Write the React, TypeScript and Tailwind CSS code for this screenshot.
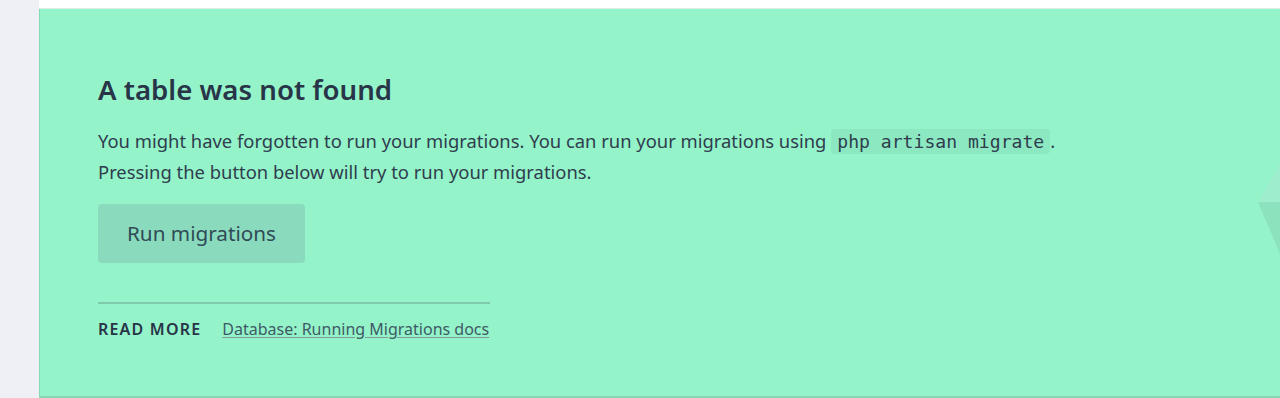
export default function App() {
  return (
    <div className="flex h-[398px] w-[1280px] overflow-hidden bg-[#eef0f5]" style={{ fontFamily: '"Noto Sans", "Open Sans", sans-serif' }}>
      <div className="w-[39px] shrink-0" />
      <div className="flex min-w-0 flex-1 flex-col bg-white">
        <div className="h-[9px] shrink-0 border-b border-[#d9eee4]" />
        <div className="relative flex-1 border-l border-[#86d9b6] border-b-2 border-b-[#86d6b3] bg-[#94f3c9] pl-[58px] pt-[60px] text-[#2f3d4e]">
          <h2 className="text-[27.6px] font-semibold leading-[40px] text-[#283447]">A table was not found</h2>
          <p className="mt-[17px] text-[18.4px] leading-[30px]">
            You might have forgotten to run your migrations. You can run your migrations using{' '}
            <code className="rounded-sm bg-[#8ce8c0] px-[6px] py-[2px] text-[18.1px]" style={{ fontFamily: '"DejaVu Sans Mono", monospace' }}>php artisan migrate</code>
            .
            <br />
            Pressing the button below will try to run your migrations.
          </p>
          <button className="mt-[17px] h-[59px] w-[207px] rounded-sm bg-[#8adabd] text-[20.7px] text-[#2f4a55]">Run migrations</button>
          <div className="mt-[39px] w-[392px] border-t-2 border-[#7fcbab] pt-[13px]">
            <div className="flex items-center gap-[21px] text-[16px]">
              <span className="text-[16px] font-semibold tracking-[1.2px] text-[#283447]">READ MORE</span>
              <a className="text-[#3e5a66] underline decoration-[#7e9a9a] underline-offset-2">Database: Running Migrations docs</a>
            </div>
          </div>
          <svg className="absolute right-0 top-[155px]" width="24" height="90" viewBox="0 0 24 90">
            <polygon points="24,0 2,38 24,38" fill="#9eeece" />
            <polygon points="2,38 24,38 24,90" fill="#8be2bd" />
          </svg>
        </div>
      </div>
    </div>
  );
}
